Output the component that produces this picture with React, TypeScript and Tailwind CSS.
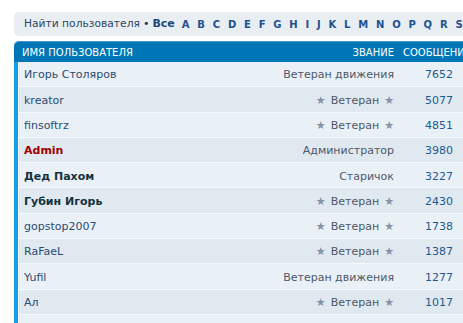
import React from 'react';

const letters = ['A', 'B', 'C', 'D', 'E', 'F', 'G', 'H', 'I', 'J', 'K', 'L', 'M', 'N', 'O', 'P', 'Q', 'R', 'S', 'T', 'U'];

type Member = {
  name: string;
  rank: string;
  posts: number;
  stars?: boolean;
  kind?: 'admin' | 'bold';
};

const members: Member[] = [
  { name: 'Игорь Столяров', rank: 'Ветеран движения', posts: 7652 },
  { name: 'kreator', rank: 'Ветеран', posts: 5077, stars: true },
  { name: 'finsoftrz', rank: 'Ветеран', posts: 4851, stars: true },
  { name: 'Admin', rank: 'Администратор', posts: 3980, kind: 'admin' },
  { name: 'Дед Пахом', rank: 'Старичок', posts: 3227, kind: 'bold' },
  { name: 'Губин Игорь', rank: 'Ветеран', posts: 2430, stars: true, kind: 'bold' },
  { name: 'gopstop2007', rank: 'Ветеран', posts: 1738, stars: true },
  { name: 'RaFaeL', rank: 'Ветеран', posts: 1387, stars: true },
  { name: 'Yufil', rank: 'Ветеран движения', posts: 1277 },
  { name: 'Ал', rank: 'Ветеран', posts: 1017, stars: true },
];

function Star() {
  return <span className="text-[11px] text-[#8793a4]">★</span>;
}

export default function App() {
  return (
    <div className="w-[463px] h-[323px] overflow-hidden bg-white font-['DejaVu_Sans',sans-serif]">
      <div className="pl-[14px] pt-[12px] w-[520px]">
        {/* letter search */}
        <div className="h-[24px] rounded-[5px] bg-[#e8eef2] flex items-center pl-[10px] text-[11px]">
          <span className="text-[10.7px] text-[#2c4763]">Найти пользователя</span>
          <span className="mx-[3px] text-[#1f3a57]">•</span>
          <span className="font-bold text-[#1d4777]">Все</span>
          <div className="flex gap-[7.8px] ml-[7px] text-[10px] font-bold text-[#1f5190]">
            {letters.map((l) => (
              <span key={l}>{l}</span>
            ))}
          </div>
        </div>

        {/* member table */}
        <div className="mt-[5px]">
          <div className="h-[21px] rounded-tl-[5px] bg-[#0076b6] border-t border-[#3f98c9] flex items-center text-[10px] text-white">
            <div className="flex-1 pl-[8px]">ИМЯ ПОЛЬЗОВАТЕЛЯ</div>
            <div className="w-[120px] text-right">ЗВАНИЕ</div>
            <div className="w-[126px] pl-[9px]">СООБЩЕНИЯ</div>
          </div>
          <div className="border-l-4 border-[#169ee6]">
            {members.map((m, i) => (
              <div
                key={m.name}
                className={`h-[25.3px] pt-[3px] flex items-center border-b border-[#f7fafc] border-l border-l-[#f2f6f9] text-[11px] ${
                  i % 2 === 0 ? 'bg-[#eaf1f6]' : 'bg-[#e0e9f0]'
                }`}
              >
                <div
                  className={`flex-1 pl-[5px] ${
                    m.kind === 'admin'
                      ? 'font-bold text-[#a10000]'
                      : m.kind === 'bold'
                        ? 'font-bold text-[#143140]'
                        : 'text-[#2a4b72]'
                  }`}
                >
                  {m.name}
                </div>
                <div className="w-[200px] text-right text-[#4d586a] flex justify-end items-center gap-[5px]">
                  {m.stars && <Star />}
                  <span>{m.rank}</span>
                  {m.stars && <Star />}
                </div>
                <div className="w-[59px] text-right text-[#1c5a92]">{m.posts}</div>
                <div className="w-[67px]" />
              </div>
            ))}
            <div className="h-[25.3px] bg-[#eaf1f6] border-l border-l-[#f2f6f9]" />
          </div>
        </div>
      </div>
    </div>
  );
}
